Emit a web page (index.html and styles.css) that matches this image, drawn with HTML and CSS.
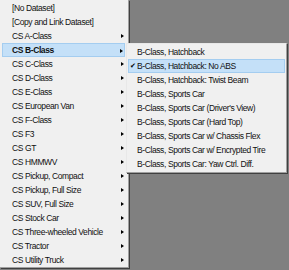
FILE: index.html
```html
<!DOCTYPE html>
<html lang="en">
<head>
    <meta charset="UTF-8">
    <title>Dataset Menu</title>
    <link rel="stylesheet" href="styles.css">
</head>
<body>

<div class="desk">
    <ul class="menu main">
        <li class="item">[No Dataset]</li>
        <li class="item">[Copy and Link Dataset]</li>
        <li class="item sub">CS A-Class</li>
        <li class="item sub open">CS B-Class</li>
        <li class="item sub">CS C-Class</li>
        <li class="item sub">CS D-Class</li>
        <li class="item sub">CS E-Class</li>
        <li class="item sub">CS European Van</li>
        <li class="item sub">CS F-Class</li>
        <li class="item sub">CS F3</li>
        <li class="item sub">CS GT</li>
        <li class="item sub">CS HMMWV</li>
        <li class="item sub">CS Pickup, Compact</li>
        <li class="item sub">CS Pickup, Full Size</li>
        <li class="item sub">CS SUV, Full Size</li>
        <li class="item sub">CS Stock Car</li>
        <li class="item sub">CS Three-wheeled Vehicle</li>
        <li class="item sub">CS Tractor</li>
        <li class="item sub">CS Utility Truck</li>
    </ul>

    <ul class="menu popup">
        <li class="item">B-Class, Hatchback</li>
        <li class="item checked hot">B-Class, Hatchback: No ABS</li>
        <li class="item">B-Class, Hatchback: Twist Beam</li>
        <li class="item">B-Class, Sports Car</li>
        <li class="item">B-Class, Sports Car (Driver's View)</li>
        <li class="item">B-Class, Sports Car (Hard Top)</li>
        <li class="item">B-Class, Sports Car w/ Chassis Flex</li>
        <li class="item">B-Class, Sports Car w/ Encrypted Tire</li>
        <li class="item">B-Class, Sports Car: Yaw Ctrl. Diff.</li>
    </ul>
</div>

</body>
</html>
```

FILE: styles.css
```css
html, body {
    margin: 0;
    padding: 0;
}
body {
    background-color: #808080;
    font-family: "Liberation Sans", Arial, sans-serif;
    font-size: 8.5px;
    letter-spacing: -0.4px;
    color: #111;
}
.desk {
    position: relative;
    width: 289px;
    height: 270px;
    overflow: hidden;
}
.menu {
    list-style: none;
    margin: 0;
    background-color: #f0f0f0;
}
.main {
    width: 126px;
    padding: 1px 0 0 2px;
    border-right: 1px solid #a0a0a0;
    border-bottom: 1px solid #a0a0a0;
    box-shadow: 1px 1px 0 #404040;
}
.item {
    position: relative;
    height: 14px;
    line-height: 14px;
    padding-left: 10px;
    margin-right: 3px;
    white-space: nowrap;
    box-sizing: border-box;
}
.sub::after {
    content: "";
    position: absolute;
    right: 1px;
    top: 5px;
    border-left: 3px solid #000;
    border-top: 2.5px solid transparent;
    border-bottom: 2.5px solid transparent;
}
.open, .hot {
    background-color: #c4e0f8;
    border: 1px solid #a4cdf0;
    line-height: 12px;
    padding-left: 9px;
}
.open {
    font-weight: bold;
}
.popup {
    position: absolute;
    left: 126px;
    top: 43px;
    width: 157px;
    padding: 1px;
    border: 1px solid #e8e8e8;
    border-right-color: #a0a0a0;
    border-bottom-color: #a0a0a0;
    box-shadow: 1px 1px 0 #404040;
}
.popup .item {
    padding-left: 9px;
    margin-right: 0;
}
.popup .hot {
    padding-left: 8px;
}
.checked::before {
    content: "\2714";
    position: absolute;
    left: 1px;
    font-size: 7px;
    color: #000;
}
```
